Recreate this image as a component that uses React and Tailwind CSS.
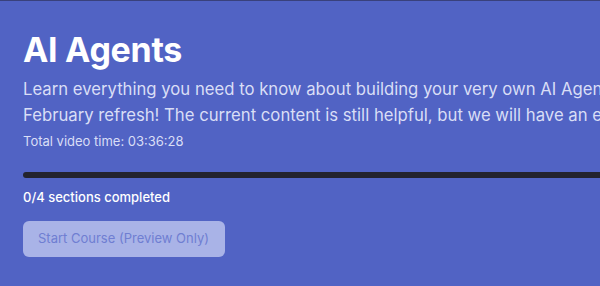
export default function App() {
  return (
    <div
      style={{ fontFamily: "Inter, 'Noto Sans', sans-serif" }}
      className="w-[600px] h-[286px] overflow-hidden bg-[#5163c4] border-t border-[#39417c]"
    >
      <div className="w-[900px] pl-[23px] pt-[29px]">
        <h1 className="text-[34px] leading-[40px] font-bold text-white tracking-[-0.3px]">AI Agents</h1>
        <p className="mt-1.5 text-[16.7px] leading-[26px] text-[#d9def6]">
          Learn everything you need to know about building your very own AI Agents! This course is getting a
          <br />
          February refresh! The current content is still helpful, but we will have an entirely new course shortly.
        </p>
        <p className="mt-[3px] text-[13px] leading-5 text-[#d9def6]">Total video time: 03:36:28</p>

        <div className="mt-[21px] h-1.5 w-full rounded-full bg-[#23232e]" />

        <p className="mt-[9px] text-[13px] leading-5 font-medium text-white">0/4 sections completed</p>

        <button className="mt-3.5 h-9 w-[202px] rounded-md bg-[#a9b3e7] text-[13px] text-[#6f7ed2] text-left pl-[15px]">
          Start Course (Preview Only)
        </button>
      </div>
    </div>
  );
}
